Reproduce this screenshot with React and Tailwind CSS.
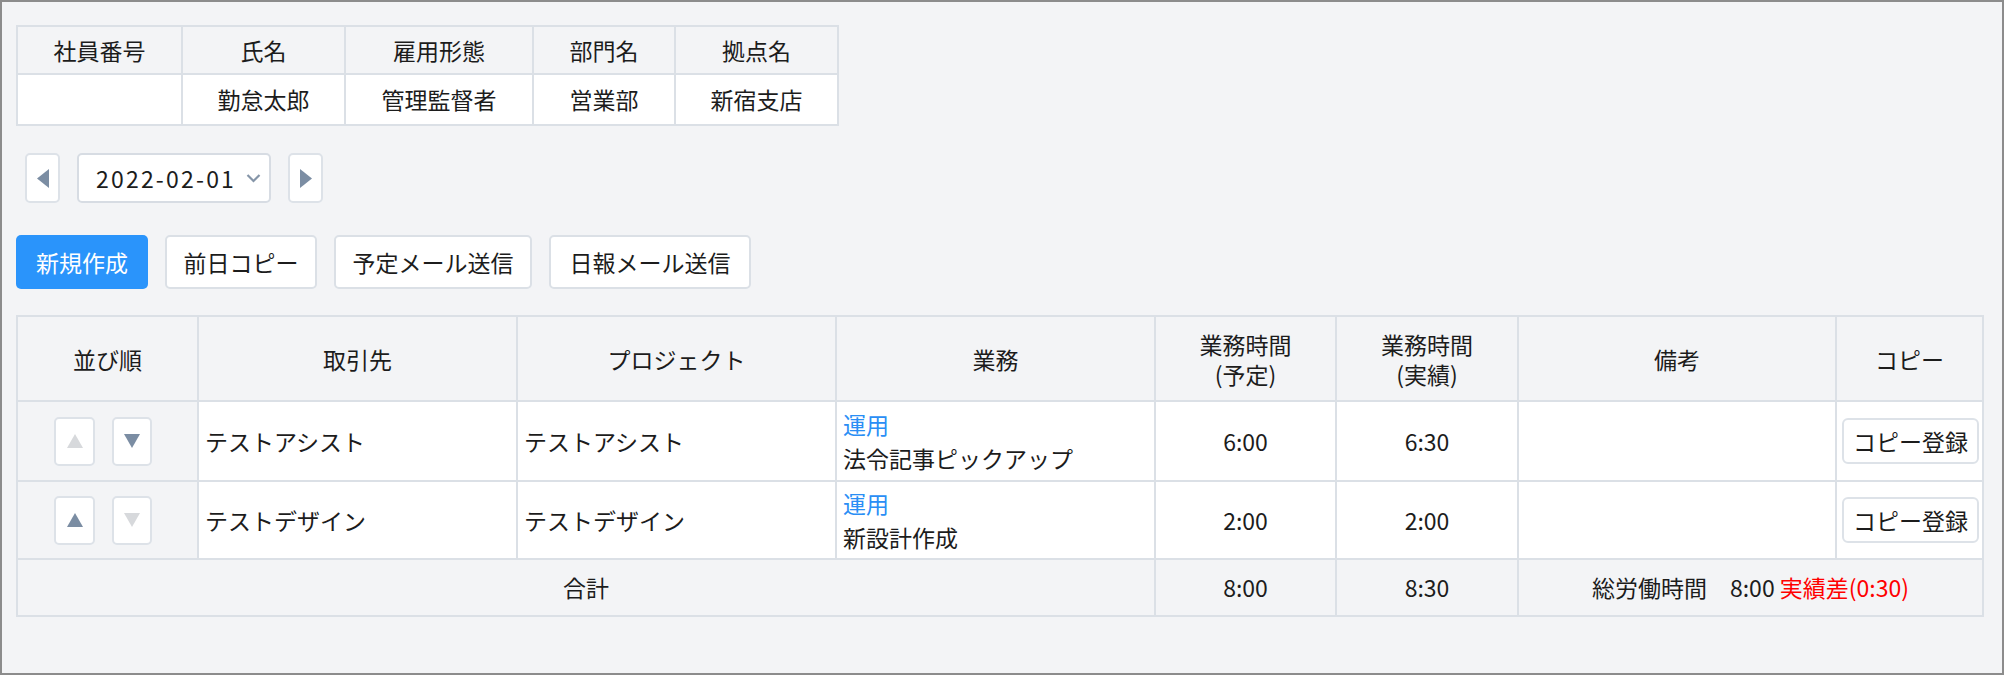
import React from "react";

const cell = "border-2 border-[#dbe0e6]";

const TriUp = ({ on }) => (
  <svg width="18" height="16" viewBox="0 0 18 16">
    <polygon points="9,1 17,15 1,15" fill={on ? "#7b8da3" : "#d7d9dc"} />
  </svg>
);

const TriDown = ({ on }) => (
  <svg width="18" height="16" viewBox="0 0 18 16">
    <polygon points="1,1 17,1 9,15" fill={on ? "#7b8da3" : "#d7d9dc"} />
  </svg>
);

const rows = [
  { client: "テストアシスト", project: "テストアシスト", task: "法令記事ピックアップ", plan: "6:00", actual: "6:30", up: false, down: true, h: "h-[80px]" },
  { client: "テストデザイン", project: "テストデザイン", task: "新設計作成", plan: "2:00", actual: "2:00", up: true, down: false, h: "h-[78px]" },
];

const App = () => {
  return (
    <div className="w-[2004px] h-[675px] border-2 border-[#8c8c8c] bg-[#f3f4f6] pt-[23px] pl-[14px] text-[23px] text-[#1c1c1c] font-['Noto_Sans_CJK_JP','Noto_Sans',sans-serif] overflow-hidden">
      {/* =====================
          EMPLOYEE INFO
      ===================== */}
      <table className="border-collapse table-fixed w-[821px] text-center">
        <thead>
          <tr className="h-[48px] bg-[#f3f4f6]">
            <th className={`${cell} w-[165px] font-normal`}>社員番号</th>
            <th className={`${cell} w-[163px] font-normal`}>氏名</th>
            <th className={`${cell} w-[188px] font-normal`}>雇用形態</th>
            <th className={`${cell} w-[142px] font-normal`}>部門名</th>
            <th className={`${cell} w-[163px] font-normal`}>拠点名</th>
          </tr>
        </thead>
        <tbody>
          <tr className="h-[51px] bg-white">
            <td className={cell}></td>
            <td className={cell}>勤怠太郎</td>
            <td className={cell}>管理監督者</td>
            <td className={cell}>営業部</td>
            <td className={cell}>新宿支店</td>
          </tr>
        </tbody>
      </table>

      {/* =====================
          DATE NAV
      ===================== */}
      <div className="flex items-center mt-[27px] ml-[9px] gap-[17px]">
        <button className="w-[35px] h-[50px] bg-white border-2 border-[#dde2e8] rounded-[5px] flex items-center justify-center">
          <svg width="14" height="19" viewBox="0 0 14 19">
            <polygon points="13,0 13,19 1,9.5" fill="#7b8da3" />
          </svg>
        </button>
        <div className="w-[194px] h-[50px] bg-white border-2 border-[#d7dce3] rounded-[5px] flex items-center pl-[17px] pr-[8px]">
          <span className="flex-1 tracking-[2.2px] whitespace-nowrap">2022-02-01</span>
          <svg width="15" height="10" viewBox="0 0 15 10">
            <polyline points="1.5,2 7.5,8 13.5,2" fill="none" stroke="#8595a8" strokeWidth="2.2" />
          </svg>
        </div>
        <button className="w-[35px] h-[50px] bg-white border-2 border-[#dde2e8] rounded-[5px] flex items-center justify-center">
          <svg width="14" height="19" viewBox="0 0 14 19">
            <polygon points="1,0 1,19 13,9.5" fill="#7b8da3" />
          </svg>
        </button>
      </div>

      {/* =====================
          ACTIONS
      ===================== */}
      <div className="flex items-center mt-[32px] gap-[17px]">
        <button className="w-[132px] h-[54px] bg-[#2a94fb] text-white rounded-[5px]">新規作成</button>
        <button className="w-[152px] h-[54px] bg-white border-2 border-[#dbe0e6] rounded-[5px]">前日コピー</button>
        <button className="w-[198px] h-[54px] bg-white border-2 border-[#dbe0e6] rounded-[5px]">予定メール送信</button>
        <button className="w-[202px] h-[54px] bg-white border-2 border-[#dbe0e6] rounded-[5px]">日報メール送信</button>
      </div>

      {/* =====================
          DAILY REPORT TABLE
      ===================== */}
      <table className="border-collapse table-fixed w-[1966px] mt-[26px]">
        <thead>
          <tr className="h-[85px] bg-[#f3f4f6] leading-[30px]">
            <th className={`${cell} w-[181px] font-normal`}>並び順</th>
            <th className={`${cell} w-[319px] font-normal`}>取引先</th>
            <th className={`${cell} w-[319px] font-normal`}>プロジェクト</th>
            <th className={`${cell} w-[319px] font-normal`}>業務</th>
            <th className={`${cell} w-[181px] font-normal`}>業務時間<br />(予定)</th>
            <th className={`${cell} w-[182px] font-normal`}>業務時間<br />(実績)</th>
            <th className={`${cell} w-[318px] font-normal`}>備考</th>
            <th className={`${cell} w-[147px] font-normal`}>コピー</th>
          </tr>
        </thead>
        <tbody>
          {rows.map((r, i) => (
            <tr key={i} className={`${r.h} bg-white`}>
              <td className={`${cell} bg-[#f3f4f6]`}>
                <div className="flex justify-start gap-[17px] pl-[36px]">
                  <button className="w-[41px] h-[49px] bg-white border-2 border-[#dde2e8] rounded-[5px] flex items-center justify-center">
                    <TriUp on={r.up} />
                  </button>
                  <button className="w-[40px] h-[49px] bg-white border-2 border-[#dde2e8] rounded-[5px] flex items-center justify-center">
                    <TriDown on={r.down} />
                  </button>
                </div>
              </td>
              <td className={`${cell} px-[6px]`}>{r.client}</td>
              <td className={`${cell} px-[6px]`}>{r.project}</td>
              <td className={`${cell} px-[6px] leading-[34px]`}>
                <div className="text-[#2a8ef5]">運用</div>
                <div>{r.task}</div>
              </td>
              <td className={`${cell} text-center`}>{r.plan}</td>
              <td className={`${cell} text-center`}>{r.actual}</td>
              <td className={cell}></td>
              <td className={`${cell} px-[5px]`}>
                <button className="w-[137px] h-[46px] bg-white border-2 border-[#dde2e8] rounded-[6px]">コピー登録</button>
              </td>
            </tr>
          ))}
          <tr className="h-[57px] bg-[#f3f4f6] text-center">
            <td className={cell} colSpan={4}>合計</td>
            <td className={cell}>8:00</td>
            <td className={cell}>8:30</td>
            <td className={cell} colSpan={2}>
              総労働時間　8:00 <span className="text-[#ff0000]">実績差(0:30)</span>
            </td>
          </tr>
        </tbody>
      </table>
    </div>
  );
};

export default App;
